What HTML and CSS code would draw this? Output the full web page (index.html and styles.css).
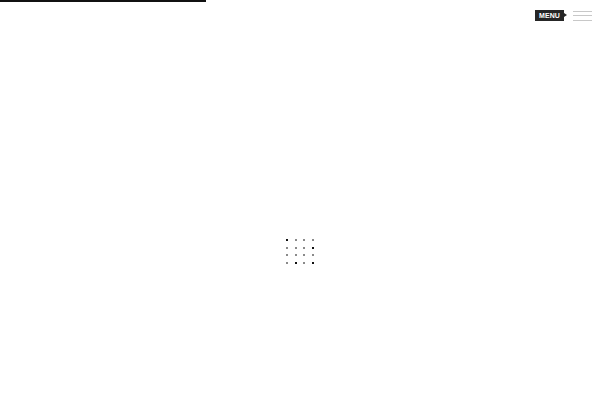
FILE: index.html
```html
<!DOCTYPE html>
<html>
<head>
<meta charset="utf-8">
<link rel="stylesheet" href="styles.css">
</head>
<body>
<div class="progress"></div>
<header class="header">
  <span class="menu-label">MENU</span>
  <span class="burger"><i></i><i></i><i></i></span>
</header>
<main class="stage">
  <div class="loader">
    <span class="dot dark"></span><span class="dot"></span><span class="dot"></span><span class="dot"></span>
    <span class="dot"></span><span class="dot"></span><span class="dot"></span><span class="dot dark"></span>
    <span class="dot"></span><span class="dot"></span><span class="dot"></span><span class="dot"></span>
    <span class="dot"></span><span class="dot dark"></span><span class="dot"></span><span class="dot dark"></span>
  </div>
</main>
</body>
</html>
```
FILE: styles.css
```css
html, body {
  margin: 0;
  padding: 0;
  background: #fff;
  font-family: "Liberation Sans", Arial, sans-serif;
}
body {
  width: 600px;
  height: 400px;
  overflow: hidden;
}
.progress {
  position: fixed;
  top: 0;
  left: 0;
  width: 206px;
  height: 2px;
  background: #111;
}
.header {
  display: flex;
  justify-content: flex-end;
  align-items: center;
  padding: 10px 8px 0 0;
  gap: 9px;
}
.menu-label {
  position: relative;
  display: flex;
  align-items: center;
  justify-content: center;
  width: 29px;
  height: 11px;
  background: #262626;
  color: #fff;
  font-size: 7px;
  font-weight: bold;
  letter-spacing: 0.1px;
}
.menu-label::after {
  content: "";
  position: absolute;
  right: -3px;
  top: 3px;
  border-left: 3px solid #262626;
  border-top: 2.5px solid transparent;
  border-bottom: 2.5px solid transparent;
}
.burger {
  display: flex;
  flex-direction: column;
  gap: 3.5px;
  width: 19px;
}
.burger i {
  display: block;
  height: 1px;
  background: #c8c8c8;
}
.stage {
  display: flex;
  justify-content: center;
  padding-top: 218px;
}
.loader {
  display: grid;
  grid-template-columns: repeat(4, 2px);
  grid-auto-rows: 2px;
  column-gap: 6.4px;
  row-gap: 5.7px;
}
.dot {
  width: 2px;
  height: 2px;
  background: #8a8a8a;
}
.dot.dark {
  background: #111;
}
```
